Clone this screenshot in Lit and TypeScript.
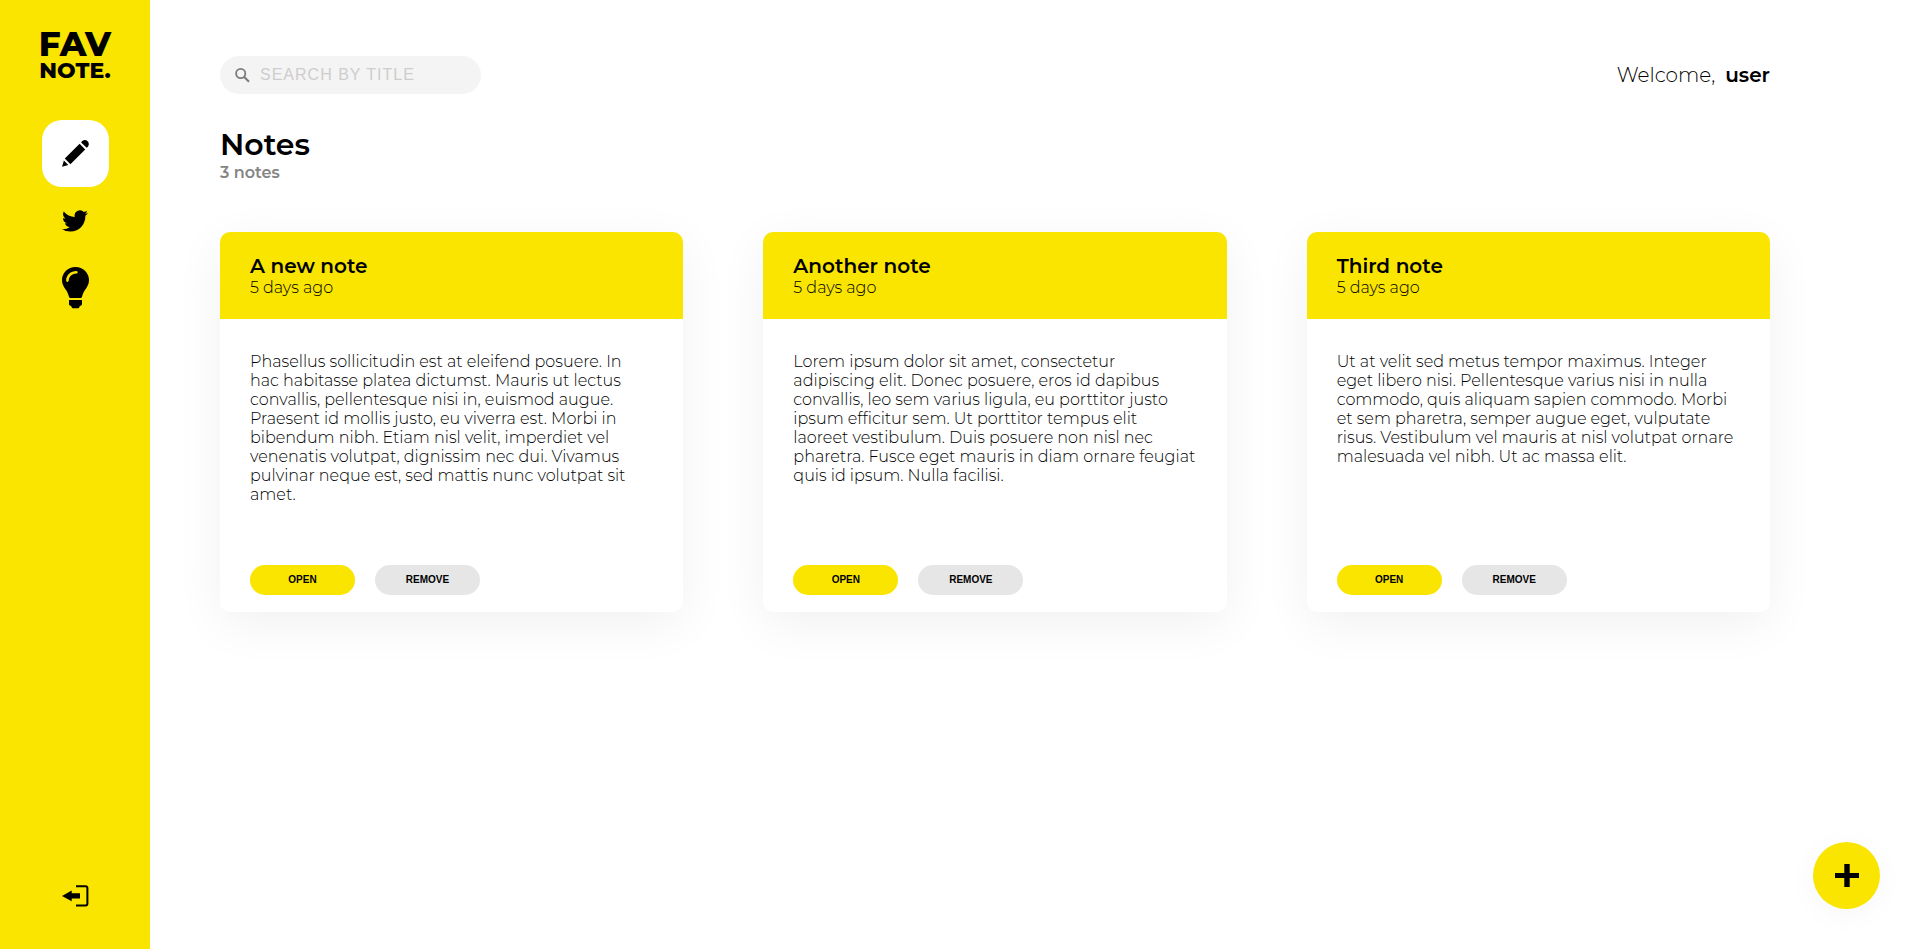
import { LitElement, html, css, svg } from "lit";
import { customElement, property, state } from "lit/decorators.js";

interface Note {
  id: number;
  title: string;
  created: string;
  content: string;
}

const icons = {
  pen: svg`<svg viewBox="0 0 27 27" width="27" height="27" aria-hidden="true">
    <path d="M2.800 18.600 17.600 3.800l5.600 5.600L8.400 24.200z M0 26.700l1.900-6.200 4.400 4.500z M19.100 2.400c2-2.900 4.700-3 6.500-1.200s1.700 4.500-.9 6.600z" />
  </svg>`,
  twitter: svg`<svg viewBox="0 0 24 24" width="26" height="26" aria-hidden="true">
    <path d="M23.953 4.570a10 10 0 0 1-2.825.775 4.958 4.958 0 0 0 2.163-2.723c-.951.555-2.005.959-3.127 1.184a4.920 4.920 0 0 0-8.384 4.482C7.690 8.095 4.067 6.130 1.640 3.162a4.822 4.822 0 0 0-.666 2.475c0 1.710.870 3.213 2.188 4.096a4.904 4.904 0 0 1-2.228-.616v.060a4.923 4.923 0 0 0 3.946 4.827 4.996 4.996 0 0 1-2.212.085 4.936 4.936 0 0 0 4.604 3.417 9.867 9.867 0 0 1-6.102 2.105c-.390 0-.779-.023-1.170-.067a13.995 13.995 0 0 0 7.557 2.209c9.053 0 13.998-7.496 13.998-13.985 0-.210 0-.420-.015-.630A9.935 9.935 0 0 0 24 4.590z" />
  </svg>`,
  bulb: svg`<svg viewBox="0 0 27 42" width="27" height="42" aria-hidden="true">
    <path fill-rule="evenodd" d="M13.500 0C21 0 27 5.800 27 13c0 4.200-1.700 6.800-4 10-1.500 2.100-2.300 4.500-3 6.700-.3.900-.8 1.300-1.600 1.300H8.600c-.8 0-1.300-.4-1.600-1.300-.7-2.200-1.500-4.600-3-6.700-2.300-3.200-4-5.800-4-10C0 5.800 6 0 13.500 0z M14.500 4C8.500 4 4.300 8 4.100 13.600c0 1.700 2.500 1.700 2.600 0C7 9.600 10 6.800 14.600 6.600c1.600-.1 1.500-2.600-.1-2.600z" />
    <path d="M7 33h13v4c0 1-.8 1.700-2.200 1.900-.4 1.500-1 2.300-2.100 2.300h-4.400c-1.100 0-1.700-.8-2.100-2.300C7.800 38.700 7 38 7 37z" />
  </svg>`,
  logout: svg`<svg viewBox="0 0 27 22" width="27" height="22" aria-hidden="true">
    <path d="M0 11 9.700 5.500V8.200H18v5.200H9.700v2.900z" />
    <path d="M14 1.200h9.500c1.200 0 1.900.7 1.900 1.900v15.400c0 1.200-.7 1.900-1.900 1.900H14" fill="none" stroke="#000" stroke-width="2" />
  </svg>`,
  search: svg`<svg viewBox="0 0 15 15" width="15" height="15" aria-hidden="true" fill="none" stroke="#7d7d7d">
    <circle cx="5.700" cy="5.500" r="4.600" stroke-width="1.800" />
    <path d="m9 8.800 5 4.900" stroke-width="2.200" />
  </svg>`,
  plus: svg`<svg viewBox="0 0 24 24" width="24" height="24" aria-hidden="true">
    <path d="M9.300 0h5.400v9h9.300v5h-9.300v9H9.300v-9H0v-5h9.300z" />
  </svg>`,
};

@customElement("fav-sidebar")
class FavSidebar extends LitElement {
  static styles = css`
    :host {
      box-sizing: border-box;
      position: sticky;
      top: 0;
      flex: 0 0 150px;
      height: 100vh;
      display: flex;
      flex-direction: column;
      align-items: center;
      padding: 28px 0 20px;
      background: #fae500;
    }
    .logo {
      display: flex;
      flex-direction: column;
      align-items: center;
      margin-bottom: 40px;
      color: #000;
      font-weight: 800;
      text-decoration: none;
    }
    .logo-top {
      font-size: 34px;
      line-height: 33px;
    }
    .logo-bottom {
      font-size: 22px;
      line-height: 19px;
    }
    .links {
      display: flex;
      flex-direction: column;
      margin: 0;
      padding: 0;
      list-style: none;
    }
    .item {
      display: flex;
      align-items: center;
      justify-content: center;
      width: 67px;
      height: 67px;
      padding: 0;
      border: 0;
      border-radius: 20px;
      background: transparent;
      cursor: pointer;
    }
    .active {
      background: #fff;
    }
    .logout {
      margin-top: auto;
    }
  `;

  render() {
    return html`
      <a class="logo" href="#/">
        <span class="logo-top">FAV</span>
        <span class="logo-bottom">NOTE.</span>
      </a>
      <nav>
        <ul class="links">
          <li><a class="item active" href="#/notes" aria-label="Notes" aria-current="page">${icons.pen}</a></li>
          <li><a class="item" href="#/twitters" aria-label="Twitters">${icons.twitter}</a></li>
          <li><a class="item" href="#/articles" aria-label="Articles">${icons.bulb}</a></li>
        </ul>
      </nav>
      <button class="item logout" type="button" aria-label="Log out">${icons.logout}</button>
    `;
  }
}

@customElement("note-card")
class NoteCard extends LitElement {
  @property({ attribute: false }) note!: Note;

  static styles = css`
    :host {
      display: block;
    }
    .card {
      display: flex;
      flex-direction: column;
      box-sizing: border-box;
      min-height: 380px;
      height: 100%;
      border-radius: 10px;
      overflow: hidden;
      background: #fff;
      box-shadow: 0 12px 50px rgba(0, 0, 0, 0.06);
    }
    .head {
      padding: 22px 30px;
      background: #fae500;
    }
    .title {
      margin: 0;
      font-size: 20px;
      line-height: 24px;
      font-weight: 600;
    }
    .date {
      margin: 0;
      font-size: 16px;
      line-height: 19px;
      font-weight: 300;
    }
    .body {
      flex: 1;
      display: flex;
      flex-direction: column;
      justify-content: space-between;
      padding: 33px 31px 17px 30px;
    }
    .text {
      margin: 0;
      font-size: 16px;
      line-height: 19px;
      font-weight: 300;
    }
    .actions {
      display: flex;
      gap: 20px;
    }
    .btn {
      width: 105px;
      height: 30px;
      padding: 0 0 2px;
      border: 0;
      border-radius: 50px;
      background: #e6e6e6;
      color: #000;
      font: 700 10px "Liberation Sans", Arial, sans-serif;
      text-transform: uppercase;
      cursor: pointer;
    }
    .primary {
      background: #fae500;
    }
  `;

  private remove() {
    this.dispatchEvent(new CustomEvent("note-remove", { detail: this.note.id }));
  }

  render() {
    return html`
      <article class="card">
        <header class="head">
          <h2 class="title">${this.note.title}</h2>
          <p class="date">${this.note.created}</p>
        </header>
        <div class="body">
          <p class="text">${this.note.content}</p>
          <div class="actions">
            <button class="btn primary" type="button">Open</button>
            <button class="btn" type="button" @click=${this.remove}>Remove</button>
          </div>
        </div>
      </article>
    `;
  }
}

@customElement("app-root")
class AppRoot extends LitElement {
  @state() private query = "";

  @state() private notes: Note[] = [
    {
      id: 1,
      title: "A new note",
      created: "5 days ago",
      content:
        "Phasellus sollicitudin est at eleifend posuere. In hac habitasse platea dictumst. Mauris ut lectus convallis, pellentesque nisi in, euismod augue. Praesent id mollis justo, eu viverra est. Morbi in bibendum nibh. Etiam nisl velit, imperdiet vel venenatis volutpat, dignissim nec dui. Vivamus pulvinar neque est, sed mattis nunc volutpat sit amet.",
    },
    {
      id: 2,
      title: "Another note",
      created: "5 days ago",
      content:
        "Lorem ipsum dolor sit amet, consectetur adipiscing elit. Donec posuere, eros id dapibus convallis, leo sem varius ligula, eu porttitor justo ipsum efficitur sem. Ut porttitor tempus elit laoreet vestibulum. Duis posuere non nisl nec pharetra. Fusce eget mauris in diam ornare feugiat quis id ipsum. Nulla facilisi.",
    },
    {
      id: 3,
      title: "Third note",
      created: "5 days ago",
      content:
        "Ut at velit sed metus tempor maximus. Integer eget libero nisi. Pellentesque varius nisi in nulla commodo, quis aliquam sapien commodo. Morbi et sem pharetra, semper augue eget, vulputate risus. Vestibulum vel mauris at nisl volutpat ornare malesuada vel nibh. Ut ac massa elit.",
    },
  ];

  static styles = css`
    :host {
      display: flex;
      align-items: flex-start;
      min-height: 100vh;
      background: #fff;
      color: #000;
      font-family: Montserrat, Inter, "Open Sans", sans-serif;
    }
    .main {
      flex: 1;
      min-width: 0;
      padding: 56px 150px 56px 70px;
    }
    .bar {
      display: flex;
      align-items: center;
      justify-content: space-between;
    }
    .search {
      display: flex;
      align-items: center;
      gap: 10px;
      box-sizing: border-box;
      width: 261px;
      height: 38px;
      padding: 0 15px;
      border-radius: 50px;
      background: #f4f4f4;
    }
    .field {
      flex: 1;
      min-width: 0;
      padding: 0;
      border: 0;
      outline: 0;
      background: transparent;
      font: 16px "Liberation Sans", Arial, sans-serif;
      letter-spacing: 1px;
    }
    .field::placeholder {
      color: #cdcdcd;
      text-transform: uppercase;
    }
    .welcome {
      display: flex;
      gap: 10px;
      margin: 0;
      font-size: 20px;
      line-height: 24px;
      font-weight: 300;
    }
    .user {
      font-weight: 600;
    }
    .heading {
      margin: 33px 0 0;
      font-size: 30px;
      line-height: 36px;
      font-weight: 600;
    }
    .count {
      margin: 0 0 49px;
      font-size: 16px;
      line-height: 20px;
      font-weight: 600;
      color: #858585;
    }
    .grid {
      display: grid;
      grid-template-columns: repeat(3, minmax(0, 1fr));
      gap: 80px;
    }
    .add {
      position: fixed;
      right: 40px;
      bottom: 40px;
      display: flex;
      align-items: center;
      justify-content: center;
      width: 67px;
      height: 67px;
      padding: 0;
      border: 0;
      border-radius: 50%;
      background: #fae500;
      box-shadow: 0 5px 30px rgba(0, 0, 0, 0.04);
      cursor: pointer;
    }
    @media (max-width: 1200px) {
      .main {
        padding-right: 70px;
      }
      .grid {
        grid-template-columns: repeat(auto-fill, minmax(300px, 1fr));
        gap: 40px;
      }
    }
  `;

  private search(event: Event) {
    this.query = (event.target as HTMLInputElement).value;
  }

  private remove(event: CustomEvent<number>) {
    this.notes = this.notes.filter((note) => note.id !== event.detail);
  }

  render() {
    const visible = this.notes.filter((note) => note.title.toLowerCase().includes(this.query.toLowerCase()));
    return html`
      <fav-sidebar></fav-sidebar>
      <main class="main">
        <div class="bar">
          <label class="search">
            ${icons.search}
            <input
              class="field"
              type="text"
              placeholder="Search by title"
              aria-label="Search by title"
              .value=${this.query}
              @input=${this.search}
            />
          </label>
          <p class="welcome"><span>Welcome,</span><strong class="user">user</strong></p>
        </div>
        <h1 class="heading">Notes</h1>
        <p class="count">${visible.length} notes</p>
        <section class="grid">
          ${visible.map((note) => html`<note-card .note=${note} @note-remove=${this.remove}></note-card>`)}
        </section>
      </main>
      <button class="add" type="button" aria-label="Add note">${icons.plus}</button>
    `;
  }
}
